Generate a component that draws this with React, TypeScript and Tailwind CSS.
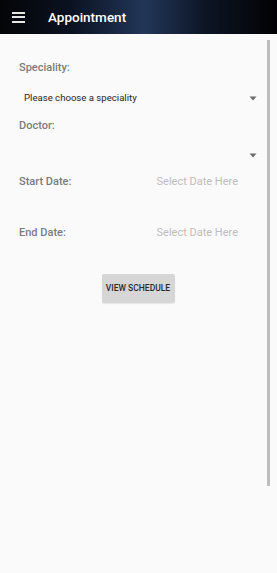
import React from "react";

function Caret() {
  return (
    <svg width="8" height="5" viewBox="0 0 8 5" className="block">
      <path d="M0.5 0.5 L7.5 0.5 L4 4.5 Z" fill="#6b6b6b" />
    </svg>
  );
}

export default function App() {
  return (
    <div
      className="w-[277px] h-[573px] bg-[#fafafa] flex flex-col overflow-hidden"
      style={{ fontFamily: "Roboto, 'Liberation Sans', sans-serif" }}
    >
      <div className="h-[34px] shrink-0 flex items-center bg-[linear-gradient(90deg,#040507_0%,#0a1120_25%,#223658_52%,#0c1424_75%,#020203_100%)]">
        <div className="ml-[12px] w-[13px] flex flex-col gap-[2.5px]">
          <div className="h-[2px] bg-[#e6e6e6]" />
          <div className="h-[2px] bg-[#e6e6e6]" />
          <div className="h-[2px] bg-[#e6e6e6]" />
        </div>
        <div className="ml-[23px] text-white text-[13.5px] font-medium">Appointment</div>
      </div>
      <div className="flex-1 flex">
        <div className="flex-1 flex flex-col pl-[19px] pr-[10px]">
          <div className="mt-[27px] h-[14px] flex items-center text-[11px] font-medium text-[#7a7a7a]">Speciality:</div>
          <div className="mt-[16px] h-[14px] flex items-center justify-between pl-[5px]">
            <span className="text-[9.6px] text-[#262626]">Please choose a speciality</span>
            <Caret />
          </div>
          <div className="mt-[14px] h-[14px] flex items-center text-[11px] font-medium text-[#7a7a7a]">Doctor:</div>
          <div className="mt-[15px] h-[14px] flex items-center justify-end">
            <Caret />
          </div>
          <div className="mt-[13px] h-[14px] flex items-center justify-between">
            <span className="text-[11px] font-medium text-[#7a7a7a]">Start Date:</span>
            <span className="text-[11px] text-[#bdbdbd] mr-[19px]">Select Date Here</span>
          </div>
          <div className="mt-[37px] h-[14px] flex items-center justify-between">
            <span className="text-[11px] font-medium text-[#7a7a7a]">End Date:</span>
            <span className="text-[11px] text-[#bdbdbd] mr-[19px]">Select Date Here</span>
          </div>
          <div className="mt-[34px] flex justify-center">
            <div className="w-[73px] h-[29px] bg-[#d6d6d6] rounded-[2px] shadow-[0_1px_1px_rgba(0,0,0,0.08)] flex items-center justify-center text-[8.5px] font-medium text-[#2a2a2a]">
              VIEW SCHEDULE
            </div>
          </div>
        </div>
        <div className="w-[10px] shrink-0 pt-[6px]">
          <div className="w-[3px] h-[446px] bg-[#bdbdbd]" />
        </div>
      </div>
    </div>
  );
}
